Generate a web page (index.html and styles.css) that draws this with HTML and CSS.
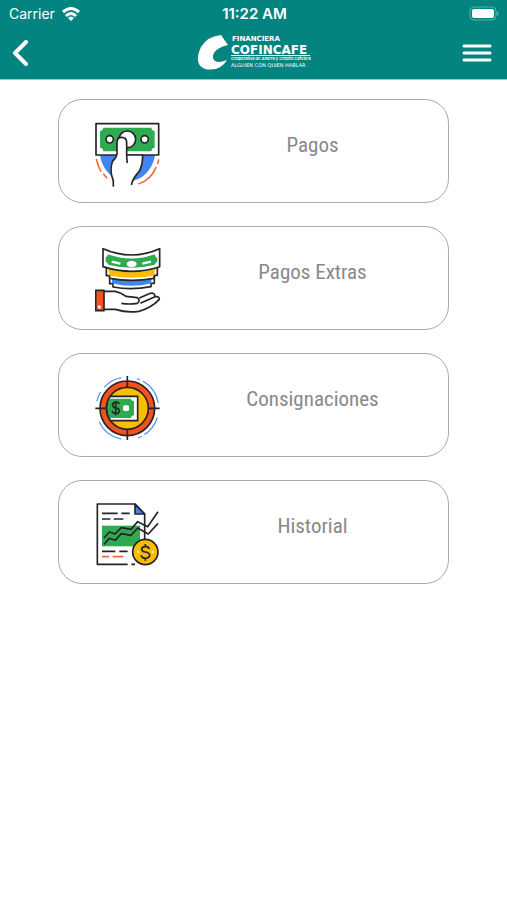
FILE: index.html
```html
<!DOCTYPE html>
<html lang="es">

<head>
    <meta charset="UTF-8">
    <meta name="viewport" content="width=device-width, initial-scale=1.0">
    <title>Cofincafe - Pagos</title>
    <link rel="stylesheet" href="styles.css">
</head>

<body>
    <header class="header">
        <div class="status">
            <div class="carrier">
                <span>Carrier</span>
                <svg width="20" height="16" viewBox="0 0 20 16" fill="none" stroke="#fff" stroke-width="3">
                    <path d="M2 6Q10 -1 18 6" />
                    <path d="M5 10Q10 5 15 10" />
                    <path d="M10 15L7 12Q10 9 13 12Z" fill="#fff" stroke="none" />
                </svg>
            </div>
            <div class="time">11:22 AM</div>
            <div class="battery">
                <svg width="31" height="15" viewBox="0 0 31 15">
                    <rect x="1" y="1" width="26" height="13" rx="4" fill="none" stroke="#5fb0ae" stroke-width="1" />
                    <rect x="3" y="3" width="22" height="9" rx="2" fill="#fff" />
                    <path d="M28 5q3 3 0 5z" fill="#5fb0ae" />
                </svg>
            </div>
        </div>
        <nav class="navbar">
            <button class="nav-button" aria-label="Volver">
                <svg width="17" height="27" viewBox="0 0 17 27" fill="none" stroke="#fff" stroke-width="4" stroke-linecap="round" stroke-linejoin="round">
                    <path d="M14 2L3 13L14 24" />
                </svg>
            </button>
            <svg class="logo" width="118" height="38" viewBox="-2 0 118 38" fill="#fff">
                <path d="M26 1Q13 2 6 13Q-2 30 10 35Q25 38 32 26Q20 31 18 24Q17 15 33 11Z" />
                <text class="logo-top" x="37" y="7">FINANCIERA</text>
                <text class="logo-name" x="36" y="20">COFINCAFE</text>
                <text class="logo-coop" x="36" y="26">Cooperativa de Ahorro y Crédito Cafetera</text>
                <text class="logo-slogan" x="36" y="33">ALGUIEN CON QUIEN HABLAR</text>
                <path d="M36 21H115V22H36Z" />
            </svg>
            <button class="nav-button" aria-label="Menú">
                <svg width="30" height="20" viewBox="0 0 30 20" stroke="#fff" stroke-width="3" stroke-linecap="round">
                    <path d="M2 3H28M2 10H28M2 17H28" />
                </svg>
            </button>
        </nav>
    </header>

    <main class="menu">
        <a class="card" href="#pagos">
            <svg class="icon" viewBox="30 24 198 198">
                <path class="blue" d="M45 126C50 165 80 205 127 205S205 165 210 126Z" />
                <path class="orange-line" d="M34 138Q39 161 48 176M55 182L66 196M221 139L218 153M213 162Q200 200 160 213" />
                <rect class="white line" x="33" y="32" width="188" height="94" />
                <path class="green" d="M55 44H199Q200 53 209 54V104Q200 105 199 115H55Q54 105 45 104V54Q54 53 55 44Z" />
                <circle class="white line" cx="74" cy="79" r="11" />
                <circle class="white line" cx="179" cy="79" r="11" />
                <circle class="white line" cx="127" cy="79" r="25" />
                <path class="white" d="M96 122V88Q96 73 110 73Q125 73 125 89V126H173Q173 158 161 177Q143 196 138 221H84Q86 202 79 186Q73 166 80 149Q88 133 96 122Z" />
                <path class="line" d="M127 150Q125 139 125 123V89Q125 73 110 73Q96 73 96 88V122Q94 135 83 144Q75 165 80 187Q87 203 85 221M127 126H173Q173 158 162 176Q144 195 139 216" />
            </svg>
            <span class="label">Pagos</span>
        </a>
        <a class="card" href="#pagos-extras">
            <svg class="icon" viewBox="30 24 198 198">
                <path class="white line" d="M74 105V131H84V141Q139 151 198 140V130H208V105Z" />
                <path class="blue" d="M81 109Q140 126 199 109V130Q140 145 81 130Z" />
                <path class="white line" d="M64 82V107H74V115Q140 127 207 115V106H217V82Z" />
                <path class="yellow" d="M69 86Q140 107 211 86L207 107Q140 119 74 107Z" />
                <path class="white line" d="M54 26Q140 64 224 26V80Q140 108 54 80Z" />
                <path class="green" d="M68 43Q140 68 210 43Q210 51 217 54V65Q211 68 209 74Q140 93 70 74Q68 67 62 66V52Q68 50 68 43Z" />
                <ellipse class="white" cx="140" cy="72" rx="15" ry="10" />
                <path d="M80 65L106 71M172 71L198 65" fill="none" stroke="#fff" stroke-width="7" />
                <rect class="orange line" x="32" y="151" width="25" height="61" />
                <circle class="white" cx="43" cy="201" r="5" />
                <path class="line" d="M57 154H91Q108 158 123 169L157 173Q168 182 157 190Q133 194 109 190M57 208H91Q125 219 161 214Q199 204 223 178Q223 168 210 170L166 190M163 174L196 160Q209 157 210 169" />
            </svg>
            <span class="label">Pagos Extras</span>
        </a>
        <a class="card" href="#consignaciones">
            <svg class="icon" viewBox="30 24 198 198">
                <circle cx="127" cy="124" r="94" class="blue-line" pathLength="360" stroke-dasharray="0 17 40 5 8 31 53 39 18 11 37 29 6 6 50 10" />
                <circle class="orange line" cx="127" cy="124" r="82" />
                <circle class="yellow line" cx="127" cy="124" r="63" />
                <path class="white line" d="M75 88H158V161H76Q56 124 75 88Z" />
                <path class="green" d="M73 95H137Q139 101 147 103V145Q139 146 137 153H74Q61 123 73 95Z" />
                <rect class="white" x="114" y="115" width="18" height="17" rx="5" />
                <path class="line" d="M103 111Q98 104 90 106Q81 109 83 116Q85 122 94 123Q104 125 103 133Q101 141 91 140Q83 139 81 132M92 102V145" />
                <path class="line" d="M31 124H65M190 124H224M127 27V61M127 187V219" />
            </svg>
            <span class="label">Consignaciones</span>
        </a>
        <a class="card" href="#historial">
            <svg class="icon" viewBox="30 24 198 198">
                <path class="white" d="M37 30H150L179 60V210H37Z" />
                <path class="line" d="M128 211H37V30H150L179 60V138M139 211H150" />
                <path class="blue line" d="M150 31V60H179Z" />
                <rect class="green" x="51" y="95" width="114" height="62" />
                <path class="line" d="M51 58H98M109 58H134M51 75H76M86 75H115M51 172H91M103 172H128" />
                <path class="orange-line" d="M51 188H72M83 188H115" />
                <path class="line" d="M57 132L73 114L90 120L109 101L138 106L158 83L188 98L219 53M57 151L73 133L90 139L109 119L138 124L158 102L190 120L219 88" />
                <circle class="yellow line" cx="181" cy="174" r="38" />
                <path class="line" d="M193 165Q190 157 181 157Q170 158 170 166Q171 173 181 174Q194 176 194 184Q193 192 181 193Q171 192 168 184M181 150V157M181 193V200" />
                <circle class="white" cx="160" cy="174" r="3" />
                <circle class="white" cx="203" cy="174" r="3" />
            </svg>
            <span class="label">Historial</span>
        </a>
    </main>
</body>

</html>
```

FILE: styles.css
```css
body {
    margin: 0;
    background-color: #fff;
    font-family: "Roboto Condensed", "Liberation Sans Narrow", Roboto, sans-serif;
}

.header {
    background-color: #048481;
    color: #fff;
    border-bottom: 1px solid #8fd0ce;
}

.status {
    display: grid;
    grid-template-columns: 1fr auto 1fr;
    align-items: center;
    height: 27px;
    padding: 0 7px 0 9px;
    font-family: Inter, sans-serif;
    font-size: 14px;
}

.carrier {
    display: flex;
    align-items: center;
    gap: 6px;
}

.time {
    font-size: 15px;
    font-weight: 600;
}

.battery {
    display: flex;
    justify-content: flex-end;
}

.navbar {
    display: flex;
    align-items: center;
    justify-content: space-between;
    height: 52px;
    padding: 0 15px 0 12px;
}

.nav-button {
    display: flex;
    width: 30px;
    padding: 0;
    border: none;
    background: none;
    cursor: pointer;
}

.logo {
    font-family: "DejaVu Sans", sans-serif;
}

.logo-top {
    font-size: 7px;
    font-weight: 700;
}

.logo-name {
    font-size: 12px;
    font-weight: 700;
}

.logo-coop {
    font-family: Inter, sans-serif;
    font-size: 4px;
    font-weight: 600;
}

.logo-slogan {
    font-size: 5px;
}

.menu {
    display: flex;
    flex-direction: column;
    align-items: center;
    gap: 23px;
    padding: 19px 0;
}

.card {
    display: flex;
    box-sizing: border-box;
    width: 77%;
    height: 104px;
    padding: 21px 0 0 36px;
    border: 1px solid #aaa;
    border-radius: 24px;
    color: #888;
    text-decoration: none;
}

.icon {
    width: 66px;
    height: 66px;
    flex-shrink: 0;
}

.label {
    flex: 1;
    margin-left: 16px;
    padding-top: 11px;
    font-size: 21px;
    line-height: 26px;
    text-align: center;
}

.line {
    stroke: #272425;
    stroke-width: 5;
    stroke-linejoin: round;
    fill: none;
}

.orange-line {
    stroke: #f46a3e;
    stroke-width: 5;
    fill: none;
}

.blue-line {
    stroke: #6496ee;
    stroke-width: 4;
    fill: none;
}

.white {
    fill: #fff;
}

.green {
    fill: #30aa51;
}

.blue {
    fill: #4384f3;
}

.yellow {
    fill: #fbbc05;
}

.orange {
    fill: #f4511e;
}
```
